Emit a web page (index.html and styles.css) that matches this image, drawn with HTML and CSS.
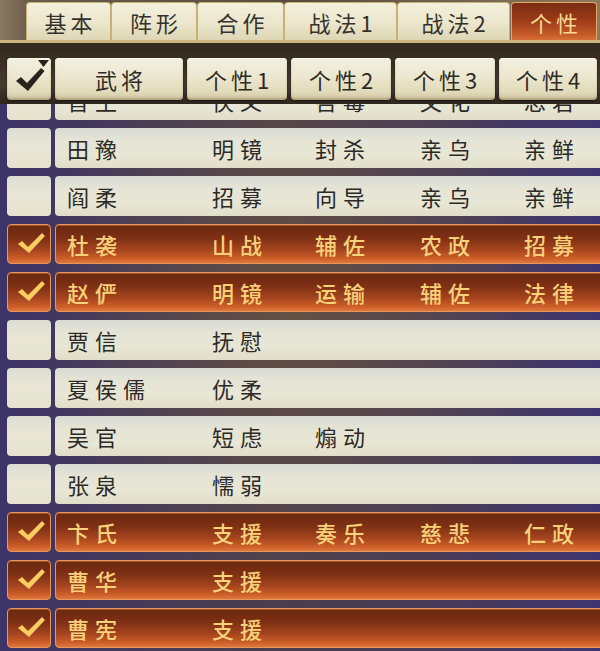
FILE: index.html
```html
<!DOCTYPE html>
<html lang="zh">
<head>
<meta charset="utf-8">
<title>个性</title>
<link rel="stylesheet" href="styles.css">
</head>
<body>
<div class="app">
  <div class="tabbar">
    <div class="tabs-lead"></div>
    <div class="tab w85">基本</div>
    <div class="tab w86">阵形</div>
    <div class="tab w87">合作</div>
    <div class="tab w113">战法1</div>
    <div class="tab w113">战法2</div>
    <div class="tab w86 active">个性</div>
  </div>
  <div class="header-band">
    <div class="header">
      <div class="hbtn hcheck">
        <svg width="44" height="42" viewBox="0 0 44 42">
          <polygon points="9,23 14,19 20,25 34,10 37.5,13 21,33" fill="#2a231d"/>
          <polygon points="31,2 42,2 36.5,9" fill="#2a231d"/>
        </svg>
      </div>
      <div class="hbtn">武将</div>
      <div class="hbtn">个性1</div>
      <div class="hbtn">个性2</div>
      <div class="hbtn">个性3</div>
      <div class="hbtn">个性4</div>
    </div>
  </div>
  <div class="list">
    <div class="list-inner">
      <div class="row">
        <div class="check"></div>
        <div class="cell"><span>晋王</span><span>侠义</span><span>吝毒</span><span>文化</span><span>忠君</span></div>
      </div>
      <div class="row">
        <div class="check"></div>
        <div class="cell"><span>田豫</span><span>明镜</span><span>封杀</span><span>亲乌</span><span>亲鲜</span></div>
      </div>
      <div class="row">
        <div class="check"></div>
        <div class="cell"><span>阎柔</span><span>招募</span><span>向导</span><span>亲乌</span><span>亲鲜</span></div>
      </div>
      <div class="row on">
        <div class="check"><svg width="44" height="40" viewBox="0 0 44 40"><polygon points="10,19 14,16 20,22 34,8 37,11 21,28" fill="#f7cf62"/></svg></div>
        <div class="cell"><span>杜袭</span><span>山战</span><span>辅佐</span><span>农政</span><span>招募</span></div>
      </div>
      <div class="row on">
        <div class="check"><svg width="44" height="40" viewBox="0 0 44 40"><polygon points="10,19 14,16 20,22 34,8 37,11 21,28" fill="#f7cf62"/></svg></div>
        <div class="cell"><span>赵俨</span><span>明镜</span><span>运输</span><span>辅佐</span><span>法律</span></div>
      </div>
      <div class="row">
        <div class="check"></div>
        <div class="cell"><span>贾信</span><span>抚慰</span><span></span><span></span><span></span></div>
      </div>
      <div class="row">
        <div class="check"></div>
        <div class="cell"><span>夏侯儒</span><span>优柔</span><span></span><span></span><span></span></div>
      </div>
      <div class="row">
        <div class="check"></div>
        <div class="cell"><span>吴官</span><span>短虑</span><span>煽动</span><span></span><span></span></div>
      </div>
      <div class="row">
        <div class="check"></div>
        <div class="cell"><span>张泉</span><span>懦弱</span><span></span><span></span><span></span></div>
      </div>
      <div class="row on">
        <div class="check"><svg width="44" height="40" viewBox="0 0 44 40"><polygon points="10,19 14,16 20,22 34,8 37,11 21,28" fill="#f7cf62"/></svg></div>
        <div class="cell"><span>卞氏</span><span>支援</span><span>奏乐</span><span>慈悲</span><span>仁政</span></div>
      </div>
      <div class="row on">
        <div class="check"><svg width="44" height="40" viewBox="0 0 44 40"><polygon points="10,19 14,16 20,22 34,8 37,11 21,28" fill="#f7cf62"/></svg></div>
        <div class="cell"><span>曹华</span><span>支援</span><span></span><span></span><span></span></div>
      </div>
      <div class="row on">
        <div class="check"><svg width="44" height="40" viewBox="0 0 44 40"><polygon points="10,19 14,16 20,22 34,8 37,11 21,28" fill="#f7cf62"/></svg></div>
        <div class="cell"><span>曹宪</span><span>支援</span><span></span><span></span><span></span></div>
      </div>
    </div>
  </div>
</div>
</body>
</html>
```

FILE: styles.css
```css
* { box-sizing: border-box; }
html, body { margin: 0; padding: 0; }
body {
  width: 600px;
  height: 651px;
  overflow: hidden;
  background: #3b3366;
  font-family: "Noto Sans CJK SC", "Noto Sans", sans-serif;
}
.app {
  width: 600px;
  height: 651px;
  overflow: hidden;
  display: flex;
  flex-direction: column;
}

/* tabs */
.tabbar {
  height: 43px;
  display: flex;
  padding-top: 2px;
  background: linear-gradient(90deg, #8a7862 0%, #6a5a4a 5%, #5a4a3c 50%, #8c7a5c 100%);
  border-bottom: 3px solid #cdb87c;
  flex-shrink: 0;
}
.tabs-lead { width: 26px; flex-shrink: 0; }
.tab {
  height: 38px;
  flex-shrink: 0;
  display: flex;
  align-items: center;
  justify-content: center;
  font-size: 22px;
  letter-spacing: 4px;
  padding-left: 4px;
  color: #34322d;
  background: linear-gradient(180deg, #f3f0dc 0%, #ebe6cc 55%, #ddd6b4 100%);
  border: 1px solid #c6b276;
  border-bottom: none;
  border-radius: 4px 4px 0 0;
}
.w85 { width: 85px; }
.w86 { width: 86px; }
.w87 { width: 87px; }
.w113 { width: 113px; }
.tab.active {
  color: #f8d890;
  background: linear-gradient(180deg, #7c2c12 0%, #9a3a18 45%, #c45a28 85%, #d8703a 100%);
  border: 1px solid #e4a866;
  border-bottom: none;
  margin-left: 1px;
}

/* header */
.header-band {
  height: 61px;
  flex-shrink: 0;
  padding-top: 15px;
  background: linear-gradient(180deg, #33291f 0%, #3d3228 40%, #463a2f 70%, #2f261e 100%);
}
.header {
  display: grid;
  grid-template-columns: 44px 128px 100px 100px 100px 98px;
  column-gap: 4px;
  padding-left: 7px;
}
.hbtn {
  height: 42px;
  display: flex;
  align-items: center;
  justify-content: center;
  font-size: 22px;
  letter-spacing: 4px;
  padding-left: 4px;
  color: #2e2b26;
  border-radius: 4px;
  background: linear-gradient(180deg, #f4f1e2 0%, #ebe6cf 45%, #e2dbba 80%, #cfc6a0 100%);
  box-shadow: inset 0 1px 0 #fffbe8, inset 0 -2px 2px rgba(120, 100, 60, 0.35), 0 1px 2px rgba(0, 0, 0, 0.5);
}
.hcheck { padding-left: 0; }
.hcheck svg { display: block; }

/* list */
.list {
  flex: 1;
  overflow: hidden;
  background:
    radial-gradient(ellipse 260px 300px at 300px 200px, rgba(120, 95, 60, 0.55), rgba(120, 95, 60, 0) 100%),
    linear-gradient(90deg, #3c3468 0%, #443a5a 20%, #4b3f4c 45%, #463b58 75%, #3f3670 100%);
}
.list-inner {
  margin-top: -24px;
  display: flex;
  flex-direction: column;
  gap: 8px;
}
.row {
  height: 40px;
  display: flex;
  gap: 4px;
  padding-left: 7px;
  margin-right: -10px;
}
.check {
  width: 44px;
  flex-shrink: 0;
  border-radius: 4px;
  background: linear-gradient(180deg, #dcdcd2 0%, #e8e6d6 40%, #e6e3cf 100%);
}
.check svg { display: block; }
.cell {
  flex: 1;
  border-radius: 4px;
  display: grid;
  grid-template-columns: 145px 103px 105px 104px 1fr;
  align-items: center;
  padding-left: 12px;
  font-size: 22px;
  letter-spacing: 6px;
  color: #2b2a27;
  background: linear-gradient(180deg, #d9dbd2 0%, #e6e5d6 35%, #e8e6d4 70%, #e0ddc8 100%);
}
.cell span { white-space: nowrap; line-height: 40px; }
.row.on .check,
.row.on .cell {
  background: linear-gradient(180deg, #6c2811 0%, #7e3014 35%, #a4441e 65%, #cc5e2a 88%, #e0783c 100%);
  border: 1px solid #e8965c;
  box-shadow: inset 0 1px 0 rgba(255, 170, 110, 0.35);
}
.row.on .cell {
  color: #f7d07a;
  font-weight: 500;
  padding-left: 11px;
}
.row.on .cell span { line-height: 38px; }
```
